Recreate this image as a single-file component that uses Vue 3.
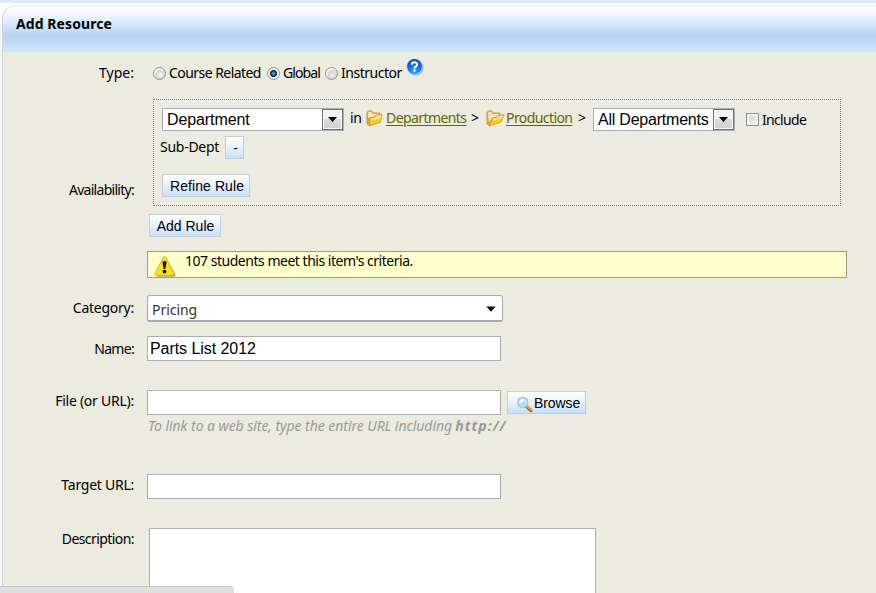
<template>
  <div class="page">
    <section class="panel">
      <header class="panel__header">
        <h1 class="panel__title">Add Resource</h1>
      </header>

      <form class="form" @submit.prevent>
        <!-- Type -->
        <div class="row row--type">
          <span class="row__label">Type:</span>
          <div class="row__field types">
            <label v-for="item in types" :key="item.id" class="radio" :class="`radio--${item.id}`">
              <input v-model="form.type" class="radio__input" type="radio" name="type" :value="item.id" />
              <span class="radio__text">{{ item.label }}</span>
            </label>
            <svg class="help" width="18" height="18" viewBox="0 0 18 18" aria-hidden="true">
              <defs>
                <radialGradient id="helpFill" cx="50%" cy="85%" r="85%">
                  <stop offset="0" stop-color="#22b4ff" />
                  <stop offset="0.55" stop-color="#0a6cf6" />
                  <stop offset="1" stop-color="#0a45d4" />
                </radialGradient>
              </defs>
              <circle cx="9.6" cy="9.6" r="8" fill="#8f98a8" opacity="0.65" />
              <circle cx="8.5" cy="8.5" r="8" fill="#b9d4fa" />
              <circle cx="8.5" cy="8.5" r="7.4" fill="url(#helpFill)" />
              <path d="M5.9 6.7C5.9 3.6 11.1 3.6 11.1 6.5C11.1 8.4 8.5 8.3 8.5 10.4" fill="none" stroke="#fff" stroke-width="2" />
              <rect x="7.4" y="11.4" width="2.2" height="2.1" fill="#fff" />
            </svg>
          </div>
        </div>

        <!-- Availability -->
        <div class="row row--availability">
          <span class="row__label">Availability:</span>
          <div class="row__field">
            <div class="rule">
              <div class="rule__line">
                <span class="combo combo--scope">
                  <span class="combo__value">Department</span>
                  <span class="combo__arrow"><svg width="9" height="5" viewBox="0 0 9 5"><path d="M0 0H9L4.5 5Z" /></svg></span>
                </span>
                <span class="word-in">in</span>
                <svg class="folder" width="17" height="18" viewBox="0 0 17 18" aria-hidden="true">
                  <path d="M0.8 4L2.3 1.8H5.6L7 3.8L14 4V13L3.2 16.8L1 15Z" fill="#dfa838" stroke="#c2934a" stroke-width="0.7" />
                  <path d="M2 4.2L3 2.7H5.2L6.8 4.9H13V6L4.4 8.6L2.2 9Z" fill="#fbe6b0" />
                  <path d="M3.2 16.8L4.4 8.8L8.2 8.2L9.6 6.2L16 5.6L14.3 13.4Z" fill="#fcc823" stroke="#c8901c" stroke-width="0.7" />
                  <path d="M5 9.5L8.8 8.9L10.1 6.9L15.2 6.4L14.6 9.2L4.6 11.9Z" fill="#ffe680" />
                </svg>
                <a class="link link--departments" href="#">Departments</a>
                <span class="sep sep--first">&gt;</span>
                <svg class="folder folder--open" width="19" height="18" viewBox="0 0 19 18" aria-hidden="true">
                  <path d="M0.8 4L2.3 1.8H5.6L7 3.8L14 4V12L3.2 16.8L1 15Z" fill="#dfa838" stroke="#c2934a" stroke-width="0.7" />
                  <path d="M2 4.2L3 2.7H5.2L6.8 4.9H13V7L6 9L2.8 13Z" fill="#fbe6b0" />
                  <path d="M3.2 16.8L6.6 9L10.4 8.4L12 6.4L18.2 5.8L14.5 13.4Z" fill="#fcc823" stroke="#c8901c" stroke-width="0.7" />
                  <path d="M7.2 9.7L11 9.1L12.5 7.1L17.2 6.7L16 9.4L6 12.1Z" fill="#ffe680" />
                </svg>
                <a class="link link--production" href="#">Production</a>
                <span class="sep sep--second">&gt;</span>
                <span class="combo combo--target">
                  <span class="combo__value">All Departments</span>
                  <span class="combo__arrow"><svg width="9" height="5" viewBox="0 0 9 5"><path d="M0 0H9L4.5 5Z" /></svg></span>
                </span>
                <input v-model="form.includeSub" class="check" type="checkbox" aria-label="Include Sub-Dept" />
                <span class="word-include">Include</span>
              </div>
              <div class="rule__line rule__line--sub">
                <span class="word-sub">Sub-Dept</span>
                <button class="btn btn--minus" type="button">-</button>
              </div>
              <button class="btn btn--refine" type="button">Refine Rule</button>
            </div>
            <button class="btn btn--add" type="button">Add Rule</button>
            <div class="notice">
              <svg class="notice__icon" width="22" height="22" viewBox="0 0 22 22" aria-hidden="true">
                <path d="M11.5 2.5L21.3 19.8Q21.6 21.3 20 21.5H3Z" fill="#777" opacity="0.8" />
                <path d="M10.5 1.2Q11.2 1.2 11.6 2L20 18.6Q20.4 20.3 18.7 20.4H2.2Q0.5 20.3 1.1 18.6L9.4 2Q9.8 1.2 10.5 1.2Z" fill="#ffe11a" stroke="#d9b100" stroke-width="0.9" />
                <path d="M10.5 3L18.3 18.6Q14 12 10.5 3Z" fill="#f5bf00" />
                <path d="M8.4 7Q10.5 5.2 12.6 7L11.4 13.8H9.6Z" fill="#111" />
                <circle cx="10.5" cy="16.6" r="1.9" fill="#111" />
              </svg>
              <span class="notice__text">107 students meet this item's criteria.</span>
            </div>
          </div>
        </div>

        <!-- Category -->
        <div class="row row--category">
          <span class="row__label">Category:</span>
          <div class="row__field">
            <div class="picker">
              <span class="picker__value">{{ form.category }}</span>
              <svg width="10" height="6" viewBox="0 0 10 6"><path d="M0.3 0.4H9.7L5 5.7Z" fill="#111" /></svg>
            </div>
          </div>
        </div>

        <!-- Name -->
        <div class="row row--name">
          <span class="row__label">Name:</span>
          <div class="row__field">
            <input v-model="form.name" class="text" type="text" />
          </div>
        </div>

        <!-- File -->
        <div class="row row--file">
          <span class="row__label">File (or URL):</span>
          <div class="row__field">
            <div class="file">
              <input v-model="form.file" class="text" type="text" />
              <button class="btn btn--browse" type="button">
                <svg width="17" height="17" viewBox="0 0 17 17" aria-hidden="true">
                  <path d="M10.5 10.5L15 14.6" stroke="#a8651f" stroke-width="3.2" stroke-linecap="round" />
                  <path d="M10.9 10L15.2 13.8" stroke="#f5a12c" stroke-width="1.8" stroke-linecap="round" />
                  <circle cx="6.8" cy="6.4" r="5" fill="#bfe8fb" stroke="#b4c0cb" stroke-width="1.5" />
                  <path d="M3.6 6.8Q3.8 3.4 7.4 3.1Q8 5.8 3.6 6.8Z" fill="#f4fcff" />
                  <path d="M5 9Q9 9.6 10 5.8Q8 7.8 5 9Z" fill="#79cdf4" />
                </svg>
                <span>Browse</span>
              </button>
            </div>
            <p class="hint"><span class="hint__text">To link to a web site, type the entire URL including</span> <b class="hint__scheme">http://</b></p>
          </div>
        </div>

        <!-- Target -->
        <div class="row row--target">
          <span class="row__label">Target URL:</span>
          <div class="row__field">
            <input v-model="form.target" class="text" type="text" />
          </div>
        </div>

        <!-- Description -->
        <div class="row row--description">
          <span class="row__label">Description:</span>
          <div class="row__field">
            <textarea v-model="form.description" class="area" />
          </div>
        </div>
      </form>
    </section>
    <!-- Empty browser status bubble over the bottom-left corner -->
    <div class="status" />
  </div>
</template>

<script setup>
import { reactive } from 'vue';

const types = [
  { id: 'course', label: 'Course Related' },
  { id: 'global', label: 'Global' },
  { id: 'instructor', label: 'Instructor' },
];

const form = reactive({
  type: 'global',
  includeSub: false,
  category: 'Pricing',
  name: 'Parts List 2012',
  file: '',
  target: '',
  description: '',
});
</script>

<style>
body {
  margin: 0;
  overflow: hidden;
}
</style>

<style scoped>
* {
  box-sizing: border-box;
}

.page {
  position: relative;
  height: 593px;
  padding: 5px 0 0 2px;
  overflow: hidden;
  background: linear-gradient(#dbeafb 0 3px, #fff 3px 6px, #f6f6f6 30px);
  font-family: 'Noto Sans', 'Open Sans', sans-serif;
  font-size: 14px;
  line-height: 18px;
  letter-spacing: -0.4px;
  color: #000;
}

.panel {
  height: 588px;
  border-left: 1px solid #cfd2d6;
  border-top: 1px solid #e6e8ea;
  border-top-left-radius: 14px;
  background: #ebebdf;
  overflow: hidden;
}

.panel__header {
  height: 46px;
  padding: 9px 0 0 13px;
  background: linear-gradient(#fdfeff 0, #eef6ff 20%, #cfe3f9 45%, #b9d6f2 62%, #bad7f4 74%, #cde4fd 94%, #cfe5ff 100%);
}

.panel__title {
  margin: 0;
  font-size: 14px;
  line-height: 18px;
  font-weight: 700;
  letter-spacing: 0.08px;
}

/* Rows */
.row {
  display: flex;
}

.row__label {
  flex: none;
  width: 131px;
  text-align: right;
  letter-spacing: -0.25px;
}

.row__field {
  flex: 1;
  margin-left: 13px;
}

.row--type { height: 47px; padding-top: 12px; }
.row--type .row__label { letter-spacing: 0; }
.row--availability { height: 196px; }
.row--availability .row__label { padding-top: 82px; letter-spacing: -0.72px; }
.row--category { height: 41px; }
.row--category .row__label { padding-top: 4px; }
.row--name { height: 54px; }
.row--name .row__label { padding-top: 4px; letter-spacing: -0.7px; }
.row--file { height: 84px; }
.row--file .row__label { padding-top: 2px; }
.row--target { height: 54px; }
.row--target .row__label { padding-top: 2px; }
.row--description .row__label { padding-top: 2px; letter-spacing: -0.57px; }

/* Radios */
.types {
  display: flex;
  align-items: flex-start;
  padding-left: 6px;
}

.radio {
  display: flex;
  align-items: center;
  height: 18px;
}

.radio--course { width: 114px; letter-spacing: -0.55px; }
.radio--global { width: 58px; letter-spacing: -0.9px; }
.radio--instructor { width: 81px; letter-spacing: -0.48px; }

.radio__input {
  appearance: none;
  flex: none;
  width: 13px;
  height: 13px;
  margin: 1px 3px 0 0;
  border: 1px solid #8e8f8f;
  border-radius: 50%;
  background: radial-gradient(circle at 60% 65%, #f4f4f4 0, #d2d3d5 45%, #f6f6f6 62%);
}

.radio__input:checked {
  background: radial-gradient(circle at 50% 50%, #8fd0ea 0, #1d5b84 22%, #0c2b4c 42%, #f3f5f7 50%);
}

.radio__text {
  white-space: nowrap;
}

.help {
  margin-top: -6px;
}

/* Rule box */
.rule {
  width: 688px;
  height: 107px;
  margin-left: 6px;
  padding: 8px 0 0 8px;
  border: 1px dotted #7d7d74;
}

.rule__line {
  display: flex;
  align-items: flex-start;
  height: 28px;
  white-space: nowrap;
}

.rule__line--sub {
  height: 38px;
  margin-left: -2px;
}

.combo {
  display: flex;
  flex: none;
  height: 23px;
  border: 1px solid #abadb3;
  background: #fff;
  font-family: 'Liberation Sans', Arial, sans-serif;
  font-size: 16px;
  line-height: 21px;
  letter-spacing: -0.1px;
}

.combo--scope { width: 182px; }
.combo--target { width: 142px; letter-spacing: -0.22px; }

.combo__value {
  flex: 1;
  padding-left: 4px;
}

.combo__arrow {
  display: flex;
  align-items: center;
  justify-content: center;
  width: 21px;
  border: 1px solid #707070;
  background: linear-gradient(#f2f2f2 0 48%, #dcdcdc 50%, #cfcfcf);
  box-shadow: inset 0 0 0 1px #fafafa;
}

.word-in { width: 16px; margin: 1px 0 0 6px; }
.folder { flex: none; margin-top: 1px; }
.folder--open { margin-left: 6px; }

.link {
  flex: none;
  margin-top: 1px;
  color: #666600;
  letter-spacing: -0.58px;
  text-decoration: underline;
  text-underline-offset: 2px;
}

.link--departments { width: 80px; margin-left: 3px; }
.link--production { width: 68px; margin-left: 1px; }
.sep { flex: none; width: 9px; margin-top: 1px; }
.sep--first { margin-left: 5px; }
.sep--second { width: 10px; margin: 1px 5px 0 4px; }

.check {
  appearance: none;
  flex: none;
  width: 13px;
  height: 13px;
  margin: 5px 3px 0 11px;
  border: 1px solid #8e8f8f;
  background: linear-gradient(135deg, #cdd0d4, #f6f6f6);
  box-shadow: inset 0 0 0 2px #f4f4f4;
}

.word-include { margin-top: 3px; letter-spacing: -0.68px; }
.word-sub { width: 65px; margin-top: 2px; letter-spacing: -0.27px; }

/* Buttons */
.btn {
  height: 23px;
  padding: 1px 0 0;
  border: 1px solid #c8cccf;
  background: linear-gradient(#fdfeff, #e6f2ff 50%, #c5e0fd);
  color: #000;
  font-family: 'Liberation Sans', Arial, sans-serif;
  font-size: 14px;
  line-height: 21px;
  letter-spacing: 0;
  white-space: nowrap;
}

.btn--minus { width: 19px; padding-left: 2px; }
.btn--refine { display: block; width: 88px; padding-left: 2px; letter-spacing: 0.08px; }
.btn--add { display: block; width: 72px; margin: 8px 0 14px 2px; padding-left: 1px; }

.btn--browse {
  display: flex;
  align-items: center;
  width: 79px;
  margin: 1px 0 0 6px;
  padding-left: 8px;
  letter-spacing: -0.1px;
}

.btn--browse svg {
  margin: 3px 1px 0 0;
}

/* Notice */
.notice {
  display: flex;
  width: 700px;
  height: 27px;
  padding-left: 6px;
  border: 1px solid #99998f;
  background: #ffffcc;
}

.notice__icon { margin-top: 3px; }
.notice__text { margin-left: 9px; letter-spacing: -0.48px; }

/* Fields */
.picker {
  display: flex;
  align-items: center;
  justify-content: space-between;
  width: 356px;
  height: 27px;
  padding: 1px 6px 0 4px;
  border: 1px solid #a6a8ab;
  border-bottom-width: 2px;
  border-radius: 3px;
  background: #fff;
  color: #333;
  letter-spacing: -0.05px;
}

.picker__value {
  padding-top: 2px;
}

.text {
  display: block;
  width: 354px;
  height: 25px;
  padding: 0 2px;
  border: 1px solid #abadb3;
  outline: none;
  background: #fff;
  color: #000;
  font-family: 'Liberation Sans', Arial, sans-serif;
  font-size: 16px;
  letter-spacing: -0.06px;
}

.file {
  display: flex;
  align-items: flex-start;
}

.hint {
  margin: 2px 0 0 1px;
  color: #999;
  font-style: italic;
  white-space: nowrap;
}

.hint__text { letter-spacing: -0.05px; }
.hint__scheme { letter-spacing: 1px; }

.area {
  display: block;
  width: 447px;
  height: 90px;
  margin-left: 2px;
  border: 1px solid #abadb3;
  outline: none;
  background: #fff;
  resize: none;
}

.status {
  position: absolute;
  left: 0;
  bottom: 0;
  width: 234px;
  height: 7px;
  border-top: 1px solid #c4c4c4;
  border-top-right-radius: 4px;
  background: #dfdfdf;
}
</style>
